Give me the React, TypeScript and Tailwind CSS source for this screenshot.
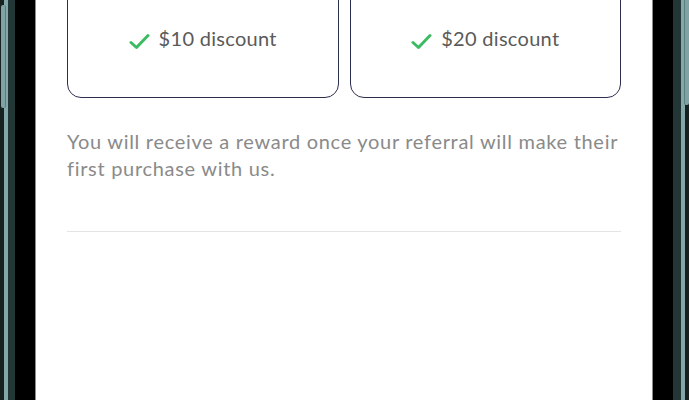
import React from "react";

function Check() {
  return (
    <svg width="21" height="17" viewBox="0 0 21 17" fill="none">
      <path d="M2 9.5 L7.5 14.5 L19 2.5" stroke="#3dbb63" strokeWidth="3" strokeLinecap="round" strokeLinejoin="round" />
    </svg>
  );
}

function Card({ label }: { label: string }) {
  return (
    <div className="h-[139px] -mt-[41px] border-[1.5px] border-[#2b2f4e] rounded-[14px] flex items-end justify-center pb-[47px] gap-[9px]">
      <Check />
      <span className="text-[20px] leading-[24px] text-[#5a5a5a] tracking-[0.3px]">{label}</span>
    </div>
  );
}

export default function App() {
  return (
    <div className="relative w-[689px] h-[400px] overflow-hidden flex bg-black" style={{ fontFamily: "Lato, 'Noto Sans', sans-serif" }}>
      {/* left frame */}
      <div className="w-[4px] bg-[#17211f]" />
      <div className="w-[4px] bg-[#84a7a9]" />
      <div className="w-[7px] bg-[#233636]" />
      <div className="w-[20px] bg-black" />
      <div className="w-[1px] bg-[#8c8c8c]" />
      {/* screen */}
      <div className="w-[617px] bg-white px-[31px] flex flex-col">
        <div className="grid grid-cols-2 gap-[11px]">
          <Card label="$10 discount" />
          <Card label="$20 discount" />
        </div>
        <p className="mt-[30px] text-[20px] leading-[27px] text-[#8a8a8a] whitespace-nowrap tracking-[0.7px]">
          You will receive a reward once your referral will make their
          <br />
          first purchase with us.
        </p>
        <div className="mt-[49px] h-[1px] bg-[#e4e4e4]" />
      </div>
      {/* right frame */}
      <div className="w-[1px] bg-[#8c8c8c]" />
      <div className="w-[20px] bg-black" />
      <div className="w-[8px] bg-[#233636]" />
      <div className="w-[4px] bg-[#84a7a9]" />
      <div className="w-[4px] bg-[#17211f]" />
      {/* side buttons */}
      <div className="absolute left-[1px] top-[5px] w-[5px] h-[103px] rounded-[2px] bg-[#7fa3a5] border-r border-[#5c7c7e]" />
      <div className="absolute right-[0px] -top-[10px] w-[5px] h-[115px] rounded-[2px] bg-[#7fa3a5] border-l border-[#5c7c7e]" />
    </div>
  );
}
